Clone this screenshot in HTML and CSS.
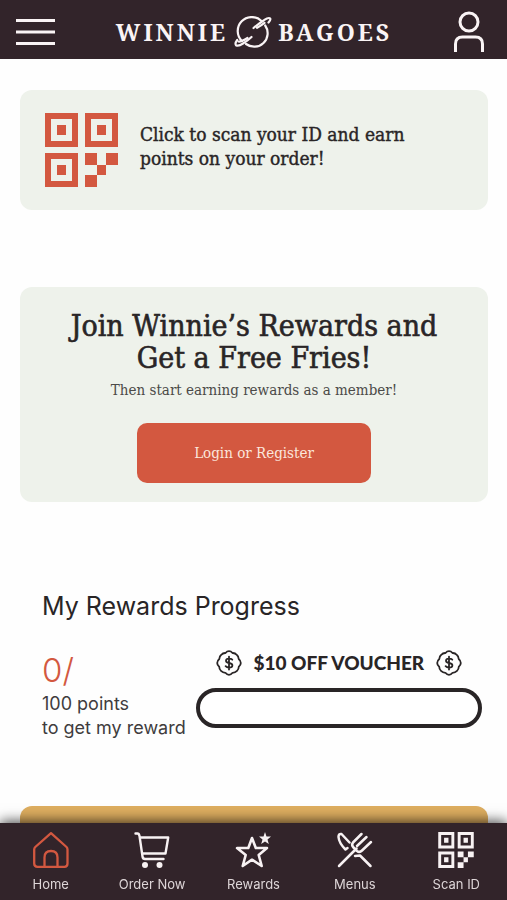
FILE: index.html
```html
<!DOCTYPE html>
<html lang="en">
<head>
<meta charset="utf-8">
<meta name="viewport" content="width=device-width, initial-scale=1">
<title>Winnie Bagoes</title>
<link rel="stylesheet" href="styles.css">
</head>
<body>
<svg class="defs" aria-hidden="true">
  <symbol id="qr" viewBox="0 0 73 74">
    <path fill-rule="evenodd" d="M0 0h33v34H0zM6 6v22h21V6zM40 0h33v34H40zM46 6v22h21V6zM0 40h33v34H0zM6 46v22h21V46z"/>
    <path d="M12 12h9v10h-9zM52 12h9v10h-9zM12 52h9v10h-9zM40 40h12v12H40zM61 40h12v12H61zM52 52h9v10h-9zM40 62h12v12H40z"/>
  </symbol>
  <symbol id="badge" viewBox="0 0 26 26">
    <g fill="none" stroke="currentColor" stroke-width="1.8" stroke-linecap="round" stroke-linejoin="round">
      <path d="M13 1.2Q15 1.2 16.500 3Q19 2.800 20.900 5Q22.400 6.200 22.700 9Q24.800 10.800 24.800 13Q24.800 15.200 22.800 16.700Q22.700 19.300 21 20.900Q19.200 22.700 16.600 22.800Q15 24.800 13 24.800Q11 24.800 9.400 22.800Q6.800 22.700 5 20.900Q3.300 19.300 3.200 16.700Q1.200 15.200 1.200 13Q1.200 10.800 3.300 9Q3.600 6.200 5.100 5Q7 2.800 9.500 3Q11 1.200 13 1.200Z"/>
      <path d="M16.300 9.700Q15.200 8.600 13 8.600Q10 8.600 10 10.700Q10 12.500 13 13Q16.400 13.500 16.400 15.400Q16.400 17.500 13 17.500Q10.800 17.500 9.600 16.200M13 6.600v12.900"/>
    </g>
  </symbol>
</svg>

<header class="topbar">
  <button class="icon-button" aria-label="Open menu">
    <svg width="40" height="30" viewBox="0 0 40 30"><path d="M1 3.500h39M1 15h39M1 26.500h39" fill="none" stroke="currentColor" stroke-width="3"/></svg>
  </button>
  <a class="brand" href="#">
    <span>WINNIE</span>
    <svg class="planet" width="38" height="32" viewBox="0 0 38 32" aria-hidden="true">
      <g fill="none" stroke="currentColor" stroke-width="2.200" stroke-linecap="round" stroke-linejoin="round">
        <path d="M8 25.200A13.500 13.500 0 0 1 27.500 5"/>
        <path d="M31.200 9.500A13.500 13.500 0 0 1 12 28"/>
        <path d="M19.500 12Q25.500 7 30 4.200Q34.500 1.200 36 2.300Q37.200 3.500 34.500 6.500"/>
        <path d="M3.200 24Q.6 27.500 2 29.200Q4.500 30.500 9 27.500Q13.500 24.800 17.500 21"/>
        <path d="M23 11.800Q27 9.500 30.500 6.800M4.500 25.500Q7 26 13.500 22"/>
      </g>
    </svg>
    <span>BAGOES</span>
  </a>
  <button class="icon-button" aria-label="Account">
    <svg width="32" height="42" viewBox="0 0 32 42"><g fill="none" stroke="currentColor" stroke-width="3"><circle cx="16" cy="11" r="9"/><path d="M2.500 41V33Q2.500 26 9.500 26H22.500Q29.500 26 29.500 33V41"/></g></svg>
  </button>
</header>

<main class="page">
  <a class="card scan" href="#">
    <svg class="scan-code" width="73" height="74" aria-hidden="true"><use href="#qr"/></svg>
    <span>Click to scan your ID and earn<br>points on your order!</span>
  </a>

  <section class="card join">
    <h1>Join Winnie’s Rewards and<br>Get a Free Fries!</h1>
    <p>Then start earning rewards as a member!</p>
    <button class="login">Login or Register</button>
  </section>

  <section class="progress">
    <h2>My Rewards Progress</h2>
    <div class="progress-row">
      <div class="points">
        <strong>0/</strong>
        <span>100 points</span>
        <span>to get my reward</span>
      </div>
      <div class="voucher">
        <div class="voucher-title">
          <svg width="26" height="26" aria-hidden="true"><use href="#badge"/></svg>
          <span>$10 OFF VOUCHER</span>
          <svg width="26" height="26" aria-hidden="true"><use href="#badge"/></svg>
        </div>
        <div class="meter" role="progressbar" aria-label="Points" aria-valuemin="0" aria-valuemax="100" aria-valuenow="0"></div>
      </div>
    </div>
  </section>

  <section class="promo"></section>
</main>

<nav class="tabs">
  <a class="active" href="#">
    <svg width="36" height="36" viewBox="0 0 36 36"><g fill="none" stroke="currentColor" stroke-width="2.300" stroke-linejoin="round"><path d="M18 1.200L33.500 15Q34.500 16 34.500 17.500V31.500Q34.500 34.800 31.500 34.800H4.500Q1.200 34.800 1.200 31.500V17.500Q1.200 16 2.300 15Z"/><path d="M11.500 34.500V25.500Q11.500 19 18 19Q24.500 19 24.500 25.500V34.500"/></g></svg>
    <span>Home</span>
  </a>
  <a href="#">
    <svg width="36" height="36" viewBox="0 0 36 36"><path d="M1.500 1.500H3.500Q5 1.500 5.500 4L8.500 24.500Q8.800 27 11 27H29.500M6 5.500H34.200L31.500 21.500H8.500" fill="none" stroke="currentColor" stroke-width="2.400" stroke-linecap="round" stroke-linejoin="round"/><circle cx="11" cy="33" r="3" fill="currentColor"/><circle cx="25.500" cy="33" r="3" fill="currentColor"/></svg>
    <span>Order Now</span>
  </a>
  <a href="#">
    <svg width="36" height="36" viewBox="0 0 36 36"><path d="M17 6L20.800 16H32L23.700 23L26.700 34L17 27.700L7.700 34L10.700 23L2 16H13.300Z" fill="none" stroke="currentColor" stroke-width="2.600" stroke-linejoin="round"/><path d="M30 0L31.500 4.500H36L32.500 7.500L33.800 12L30 9.500L26.200 12L27.500 7.500L24 4.500H28.500Z" fill="currentColor"/></svg>
    <span>Rewards</span>
  </a>
  <a href="#">
    <svg width="36" height="36" viewBox="0 0 36 36"><g fill="none" stroke="currentColor" stroke-width="2.500" stroke-linecap="round" stroke-linejoin="round"><path d="M12.500 10.500L4.500 2Q1.500 1.500 1.500 5Q2 11 8.500 17.500L10.500 16"/><path d="M2 34L19.500 16.500M24.500 2L16 10.500Q14 13 16.500 15.500L20 19Q22.500 21 25 18.500L34 10M20 14L29.500 5"/><path d="M18 24L23 23.500L33.500 34"/></g></svg>
    <span>Menus</span>
  </a>
  <a href="#">
    <svg width="36" height="36"><use href="#qr"/></svg>
    <span>Scan ID</span>
  </a>
</nav>
</body>
</html>
```
FILE: styles.css
```css
* { box-sizing: border-box; }

:root {
  --dark: #32242a;
  --accent: #d35840;
  --mint: #eef2eb;
  --ink: #292526;
  --slab: "DejaVu Serif Condensed", "DejaVu Serif", serif;
}

body {
  margin: 0;
  background: #fefefe;
  color: var(--ink);
  font-family: Inter, sans-serif;
}

h1, h2, p { margin: 0; font-weight: 400; }
a { color: inherit; text-decoration: none; }
button { border: 0; padding: 0; font: inherit; color: inherit; background: none; cursor: pointer; }
svg { display: block; fill: currentColor; }
.defs { position: absolute; width: 0; height: 0; }

.topbar {
  display: flex;
  align-items: center;
  justify-content: space-between;
  height: 59px;
  padding: 4px 22px 0 15px;
  background: var(--dark);
  color: #faf4f5;
}

.brand {
  display: flex;
  align-items: center;
  gap: 6px;
  font: 700 23px/32px "Noto Serif", var(--slab);
  letter-spacing: 3px;
}

.page { padding: 31px 19px 0 20px; }

.card { border-radius: 12px; background: var(--mint); font-family: var(--slab); }

.scan {
  display: flex;
  align-items: center;
  gap: 22px;
  min-height: 120px;
  padding: 0 25px;
  font-size: 19px;
  line-height: 24px;
  -webkit-text-stroke: 0.4px;
}
.scan-code { color: var(--accent); }
.scan span { padding-bottom: 8px; }

.join {
  display: flex;
  flex-direction: column;
  align-items: center;
  margin-top: 77px;
  padding: 23px 0 19px;
  text-align: center;
}
.join h1 { font-size: 30px; line-height: 32px; -webkit-text-stroke: 0.6px; }
.join p { margin-top: 6px; font-size: 15px; line-height: 20px; color: #4b4a48; }

.login {
  width: 50%;
  height: 60px;
  margin-top: 23px;
  border-radius: 10px;
  background: var(--accent);
  color: #fbe6dc;
  font-size: 15px;
}

.progress { margin-top: 88px; padding: 0 6px 0 22px; }
.progress h2 { font-size: 25px; line-height: 32px; }

.progress-row { display: flex; justify-content: space-between; gap: 10px; margin-top: 26px; }
.points { display: flex; flex-direction: column; flex: none; font-size: 18px; line-height: 24px; color: #403c3d; }
.points strong { font-size: 33px; font-weight: 300; line-height: 44px; color: var(--accent); }

.voucher { flex: 1; }
.voucher-title {
  display: flex;
  align-items: center;
  justify-content: center;
  gap: 12px;
  height: 30px;
  margin-bottom: 10px;
  font: 900 19px/24px Lato, sans-serif;
}
.meter { height: 40px; border: 4px solid var(--ink); border-radius: 20px; background: #fff; }

.promo { height: 94px; margin-top: 66px; border-radius: 12px; background: #deae60; }

.tabs {
  position: fixed;
  inset: auto 0 0;
  display: grid;
  grid-template-columns: repeat(5, 1fr);
  height: 77px;
  padding-top: 9px;
  background: var(--dark);
  color: #f8f2f3;
  box-shadow: 0 -2px 12px rgba(0, 0, 0, 0.7);
}
.tabs a { display: flex; flex-direction: column; align-items: center; gap: 7px; font-size: 13px; line-height: 18px; }
.tabs svg { flex: none; }
.tabs span { color: #ded6d8; }
.tabs .active svg { color: var(--accent); }
```
